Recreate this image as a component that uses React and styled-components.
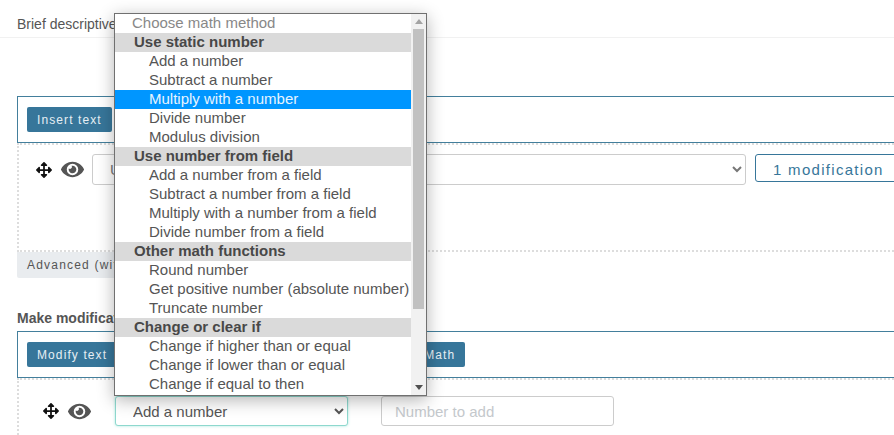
import React from 'react';
import styled, { createGlobalStyle } from 'styled-components';
import { FaArrowsAlt, FaEye } from 'react-icons/fa';

const mathGroups = [
  { label: 'Use static number', options: ['Add a number', 'Subtract a number', 'Multiply with a number', 'Divide number', 'Modulus division'] },
  { label: 'Use number from field', options: ['Add a number from a field', 'Subtract a number from a field', 'Multiply with a number from a field', 'Divide number from a field'] },
  { label: 'Other math functions', options: ['Round number', 'Get positive number (absolute number)', 'Truncate number'] },
  { label: 'Change or clear if', options: ['Change if higher than or equal', 'Change if lower than or equal', 'Change if equal to then'] },
];

const App = () => {
  return (
    <Page>
      <GlobalStyle />
      <Header>Brief descriptive</Header>

      <Toolbar>
        <ToolButton>Insert text</ToolButton>
      </Toolbar>
      <RuleBox>
        <RuleRow>
          <MoveIcon />
          <EyeIcon />
          <WideSelect defaultValue="u">
            <option value="u">Use this field</option>
          </WideSelect>
          <ModButton>1 modification</ModButton>
        </RuleRow>
      </RuleBox>
      <AdvancedBar>Advanced (with conditions)</AdvancedBar>

      <SectionTitle>Make modifications</SectionTitle>
      <Toolbar>
        <ToolButton>Modify text</ToolButton>
        <ToolButton $gap={297}>Math</ToolButton>
      </Toolbar>
      <ModifyBox>
        <ModifyRow>
          <MoveIcon />
          <EyeIcon />
          <MethodSelect defaultValue="add">
            <option value="add">Add a number</option>
          </MethodSelect>
          <NumberInput placeholder="Number to add" />
        </ModifyRow>
      </ModifyBox>

      <Dropdown>
        <OptionList>
          <Placeholder>Choose math method</Placeholder>
          {mathGroups.map((group) => (
            <React.Fragment key={group.label}>
              <GroupLabel>{group.label}</GroupLabel>
              {group.options.map((option) => (
                <Option key={option} $selected={option === 'Multiply with a number'}>
                  {option}
                </Option>
              ))}
            </React.Fragment>
          ))}
        </OptionList>
        <ScrollTrack>
          <ArrowUp />
          <ScrollThumb />
          <ArrowDown />
        </ScrollTrack>
      </Dropdown>
    </Page>
  );
};

// styles
const GlobalStyle = createGlobalStyle`
  html, body {
    margin: 0;
    padding: 0;
    background: #fff;
    overflow: hidden;
  }
  body {
    font-family: "Liberation Sans", Arial, sans-serif;
    color: #555;
  }
`;

const Page = styled.div`
  position: relative;
  width: 894px;
  height: 435px;
  overflow: hidden;
  padding-left: 17px;
  box-sizing: border-box;
`;

const Header = styled.div`
  height: 38px;
  margin-left: -17px;
  padding: 16px 0 0 17px;
  box-sizing: border-box;
  border-bottom: 1px solid #f1f1f1;
  font-size: 14px;
  line-height: 16px;
  color: #555;
  margin-bottom: 58px;
`;

const Toolbar = styled.div`
  display: flex;
  align-items: center;
  width: 900px;
  height: 47px;
  box-sizing: border-box;
  padding-left: 9px;
  border: 1px solid #437f9c;
  border-right: 0;
`;

const ToolButton = styled.button`
  height: 25px;
  margin-left: ${(props) => props.$gap || 0}px;
  padding: 0 10px;
  border: 0;
  border-radius: 2px;
  background: #37769a;
  color: #e6eff4;
  font-family: inherit;
  font-size: 12px;
  letter-spacing: 1.1px;
  flex-shrink: 0;
`;

const RuleBox = styled.div`
  width: 900px;
  height: 109px;
  box-sizing: border-box;
  border-left: 2px dotted #ddd;
  border-top: 2px dotted #ddd;
  border-bottom: 2px dotted #ddd;
`;

const RuleRow = styled.div`
  display: flex;
  align-items: center;
  height: 31px;
  margin-top: 9px;
  padding-left: 17px;
`;

const MoveIcon = styled(FaArrowsAlt)`
  width: 16px;
  height: 16px;
  color: #111;
  flex-shrink: 0;
`;

const EyeIcon = styled(FaEye)`
  width: 23px;
  height: 21px;
  margin-left: 9px;
  color: #555;
  flex-shrink: 0;
`;

const WideSelect = styled.select`
  width: 654px;
  height: 31px;
  margin-left: 8px;
  padding: 0 13px;
  border: 1px solid #ccc;
  border-radius: 3px;
  background: #fff;
  color: #777;
  font-family: inherit;
  font-size: 15px;
  flex-shrink: 0;
`;

const ModButton = styled.button`
  width: 200px;
  height: 28px;
  align-self: flex-start;
  margin-left: 9px;
  padding: 2px 0 0 17px;
  text-align: left;
  border: 1px solid #37769a;
  border-radius: 3px;
  background: #fff;
  color: #37769a;
  font-family: inherit;
  font-size: 15px;
  letter-spacing: 1.3px;
  flex-shrink: 0;
`;

const AdvancedBar = styled.div`
  width: 300px;
  height: 26px;
  padding-left: 10px;
  box-sizing: border-box;
  background: #e9ecef;
  border-radius: 0 0 2px 2px;
  font-size: 12px;
  line-height: 26px;
  letter-spacing: 1.2px;
  color: #555;
`;

const SectionTitle = styled.div`
  margin-top: 32px;
  height: 21px;
  font-size: 14px;
  font-weight: bold;
  line-height: 16px;
  color: #555;
`;

const ModifyBox = styled.div`
  width: 900px;
  height: 60px;
  box-sizing: border-box;
  border-left: 2px dotted #ddd;
  border-top: 2px dotted #ddd;
`;

const ModifyRow = styled.div`
  display: flex;
  align-items: center;
  height: 30px;
  margin-top: 16px;
  padding-left: 24px;
`;

const MethodSelect = styled.select`
  width: 233px;
  height: 30px;
  margin-left: 24px;
  padding: 0 13px;
  border: 1px solid #8ed8ce;
  border-radius: 3px;
  box-shadow: 0 0 3px #a8e6dc;
  background: #fff;
  color: #555;
  font-family: inherit;
  font-size: 15px;
  flex-shrink: 0;
`;

const NumberInput = styled.input`
  width: 233px;
  height: 30px;
  margin-left: 33px;
  padding: 0 13px;
  box-sizing: border-box;
  border: 1px solid #ccc;
  border-radius: 3px;
  font-family: inherit;
  font-size: 15px;
  flex-shrink: 0;

  &::placeholder {
    color: #c4c8cc;
  }
`;

const Dropdown = styled.div`
  position: absolute;
  left: 114px;
  top: 13px;
  width: 313px;
  height: 383px;
  box-sizing: border-box;
  display: flex;
  background: #fff;
  border: 1px solid #707070;
  box-shadow: 0 4px 16px rgba(0, 0, 0, 0.3);
`;

const OptionList = styled.div`
  flex: 1;
  overflow: hidden;
  font-size: 15px;
  line-height: 17px;
`;

const Placeholder = styled.div`
  height: 19px;
  padding-left: 17px;
  color: #888;
`;

const GroupLabel = styled.div`
  height: 19px;
  padding-left: 19px;
  background: #dadada;
  font-weight: bold;
  color: #484848;
`;

const Option = styled.div`
  height: 19px;
  padding-left: 34px;
  white-space: nowrap;
  background: ${(props) => (props.$selected ? '#0096ff' : 'transparent')};
  color: ${(props) => (props.$selected ? '#e6f4ff' : '#555')};
`;

const ScrollTrack = styled.div`
  width: 15px;
  display: flex;
  flex-direction: column;
  align-items: center;
  background: #f1f1f1;
`;

const ArrowUp = styled.div`
  width: 0;
  height: 0;
  margin: 5px 0 5px;
  border-left: 4px solid transparent;
  border-right: 4px solid transparent;
  border-bottom: 5px solid #a3a3a3;
`;

const ScrollThumb = styled.div`
  width: 11px;
  height: 280px;
  background: #c1c1c1;
`;

const ArrowDown = styled.div`
  width: 0;
  height: 0;
  margin-top: auto;
  margin-bottom: 5px;
  border-left: 4px solid transparent;
  border-right: 4px solid transparent;
  border-top: 5px solid #505050;
`;

export default App;
